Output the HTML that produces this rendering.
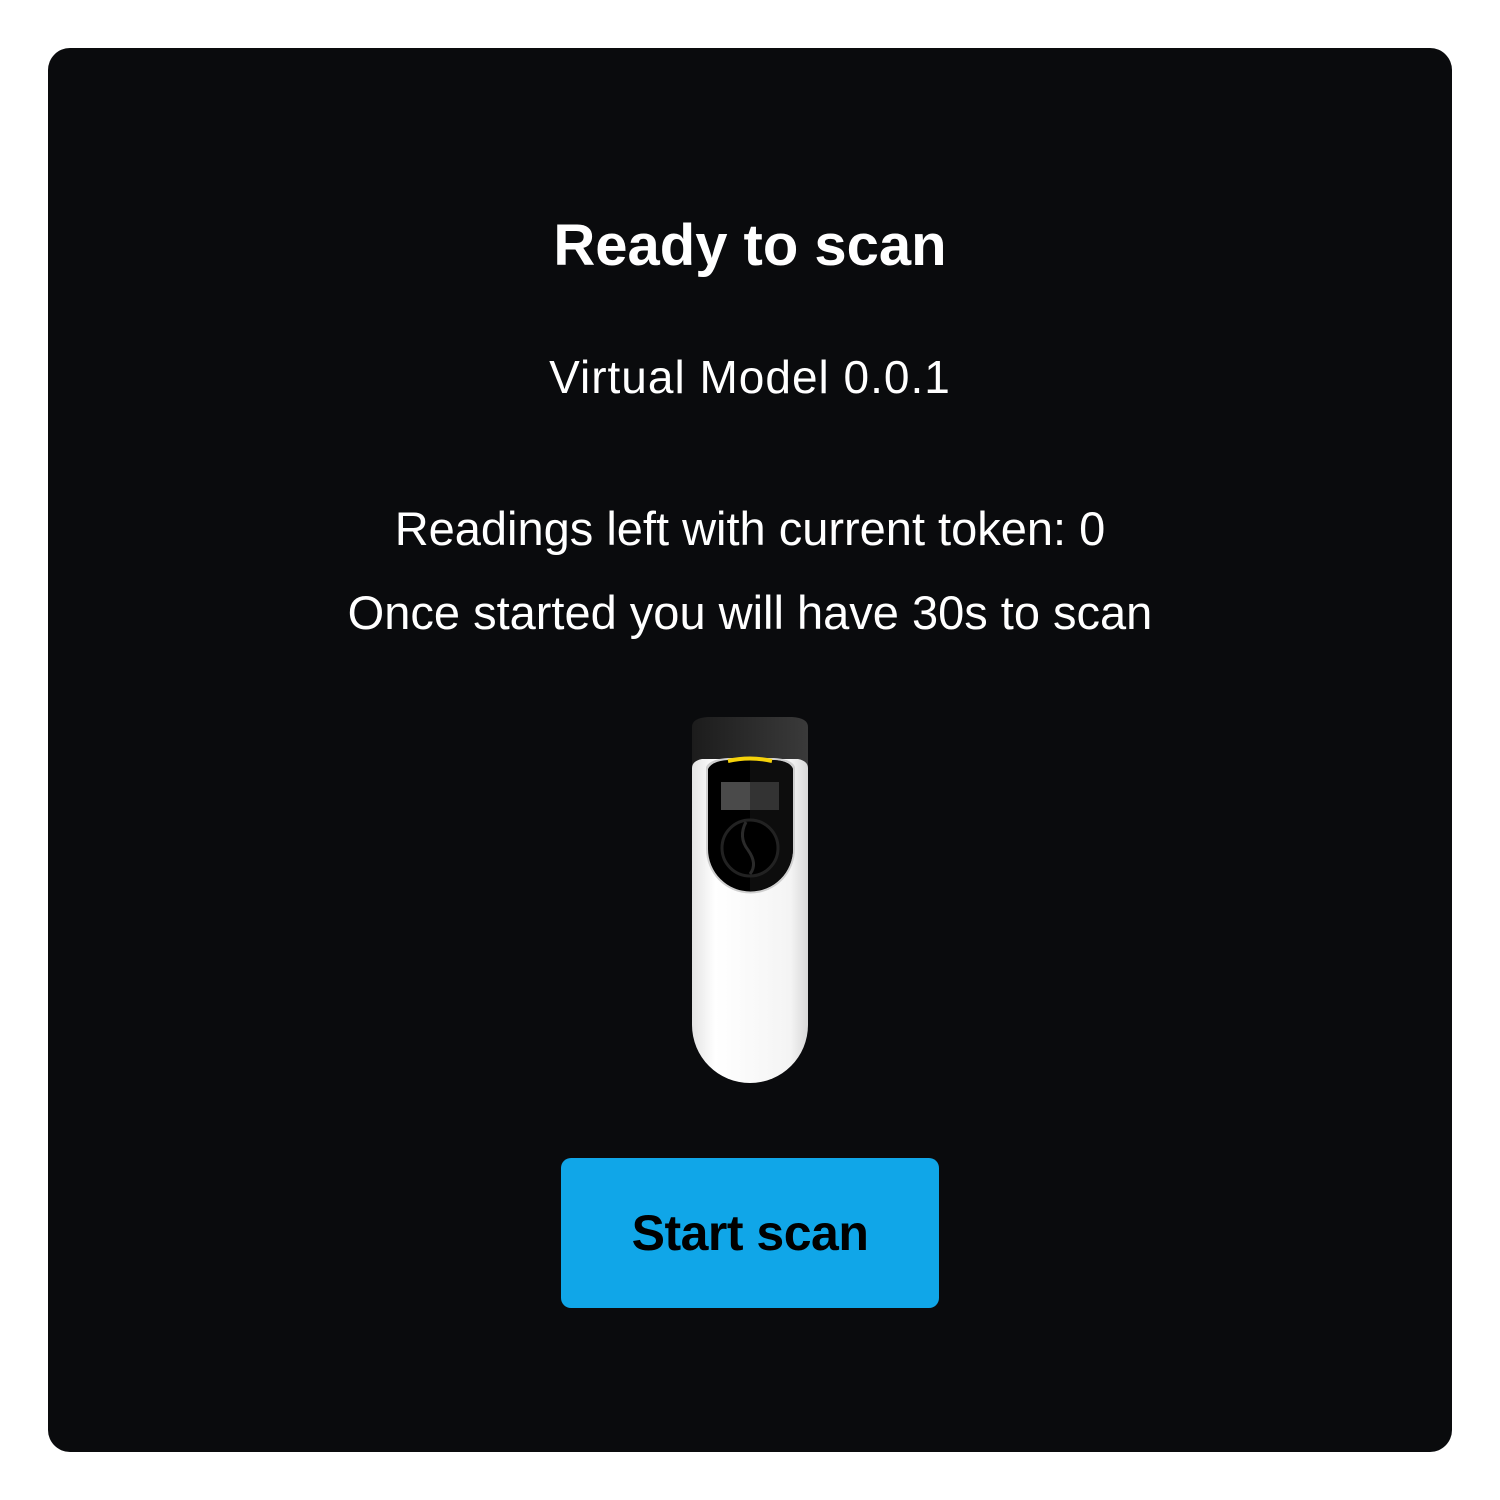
<!DOCTYPE html>
<html><head><style>
html,body{margin:0;padding:0;background:#fff;width:1500px;height:1500px;overflow:hidden}
.card{position:absolute;left:48px;top:48px;width:1404px;height:1404px;background:#0a0b0d;border-radius:22px;font-family:"Liberation Sans",sans-serif;color:#fff}
.t{position:absolute;left:0;width:100%;text-align:center;white-space:nowrap}
.btn{position:absolute;left:513px;top:1110px;width:378px;height:150px;background:#10a6e8;border-radius:10px;color:#000;font-weight:bold;font-size:50px;line-height:150px;text-align:center;letter-spacing:-0.5px}
</style></head><body>
<div class="card">
<div class="t" style="top:164px;font-size:58px;font-weight:bold">Ready to scan</div>
<div class="t" style="top:302px;font-size:46px;letter-spacing:1px">Virtual Model 0.0.1</div>
<div class="t" style="top:453px;font-size:47px">Readings left with current token: 0</div>
<div class="t" style="top:537px;font-size:47px">Once started you will have 30s to scan</div>
<svg style="position:absolute;left:640px;top:665px" width="130" height="380" viewBox="0 0 130 380">
<defs>
<linearGradient id="w" x1="0" x2="1"><stop offset="0" stop-color="#e4e4e4"/><stop offset=".2" stop-color="#fff"/><stop offset=".85" stop-color="#f4f4f4"/><stop offset="1" stop-color="#d8d8d8"/></linearGradient>
<linearGradient id="c" x1="0" x2="1"><stop offset="0" stop-color="#1c1c1c"/><stop offset="1" stop-color="#3a3a3a"/></linearGradient>
</defs>
<path d="M4 14 Q4 5 20 4 L104 4 Q120 5 120 14 L120 60 L4 60 Z" fill="url(#c)"/>
<path d="M4 55 Q4 48 14 46 L110 46 Q120 48 120 55 L120 312 A58 58 0 0 1 4 312 Z" fill="url(#w)"/>
<path d="M18 54 Q22 46 40 45 L86 45 Q104 46 107 54 L107 136 A44.5 44.5 0 0 1 18 136 Z" fill="#cfcfcf"/>
<path d="M20 56 Q24 48 40 47 L86 47 Q102 48 105 56 L105 136 A42.5 42.5 0 0 1 20 136 Z" fill="#000"/>
<path d="M62 47 L86 47 Q102 48 105 56 L105 136 A42.5 42.5 0 0 1 62 178 Z" fill="#0d0d0d"/>
<path d="M40 48 Q62 43 84 48" stroke="#f5d20a" stroke-width="4" fill="none"/>
<rect x="33" y="69" width="29" height="28" fill="#4a4a4a"/>
<rect x="62" y="69" width="29" height="28" fill="#333"/>
<circle cx="62" cy="135" r="28" fill="#000" stroke="#222" stroke-width="3"/>
<path d="M58 109 Q50 124 60 137 Q70 151 62 161" stroke="#2a2a2a" stroke-width="3" fill="none"/>
</svg>
<div class="btn">Start scan</div>
</div>
</body></html>
